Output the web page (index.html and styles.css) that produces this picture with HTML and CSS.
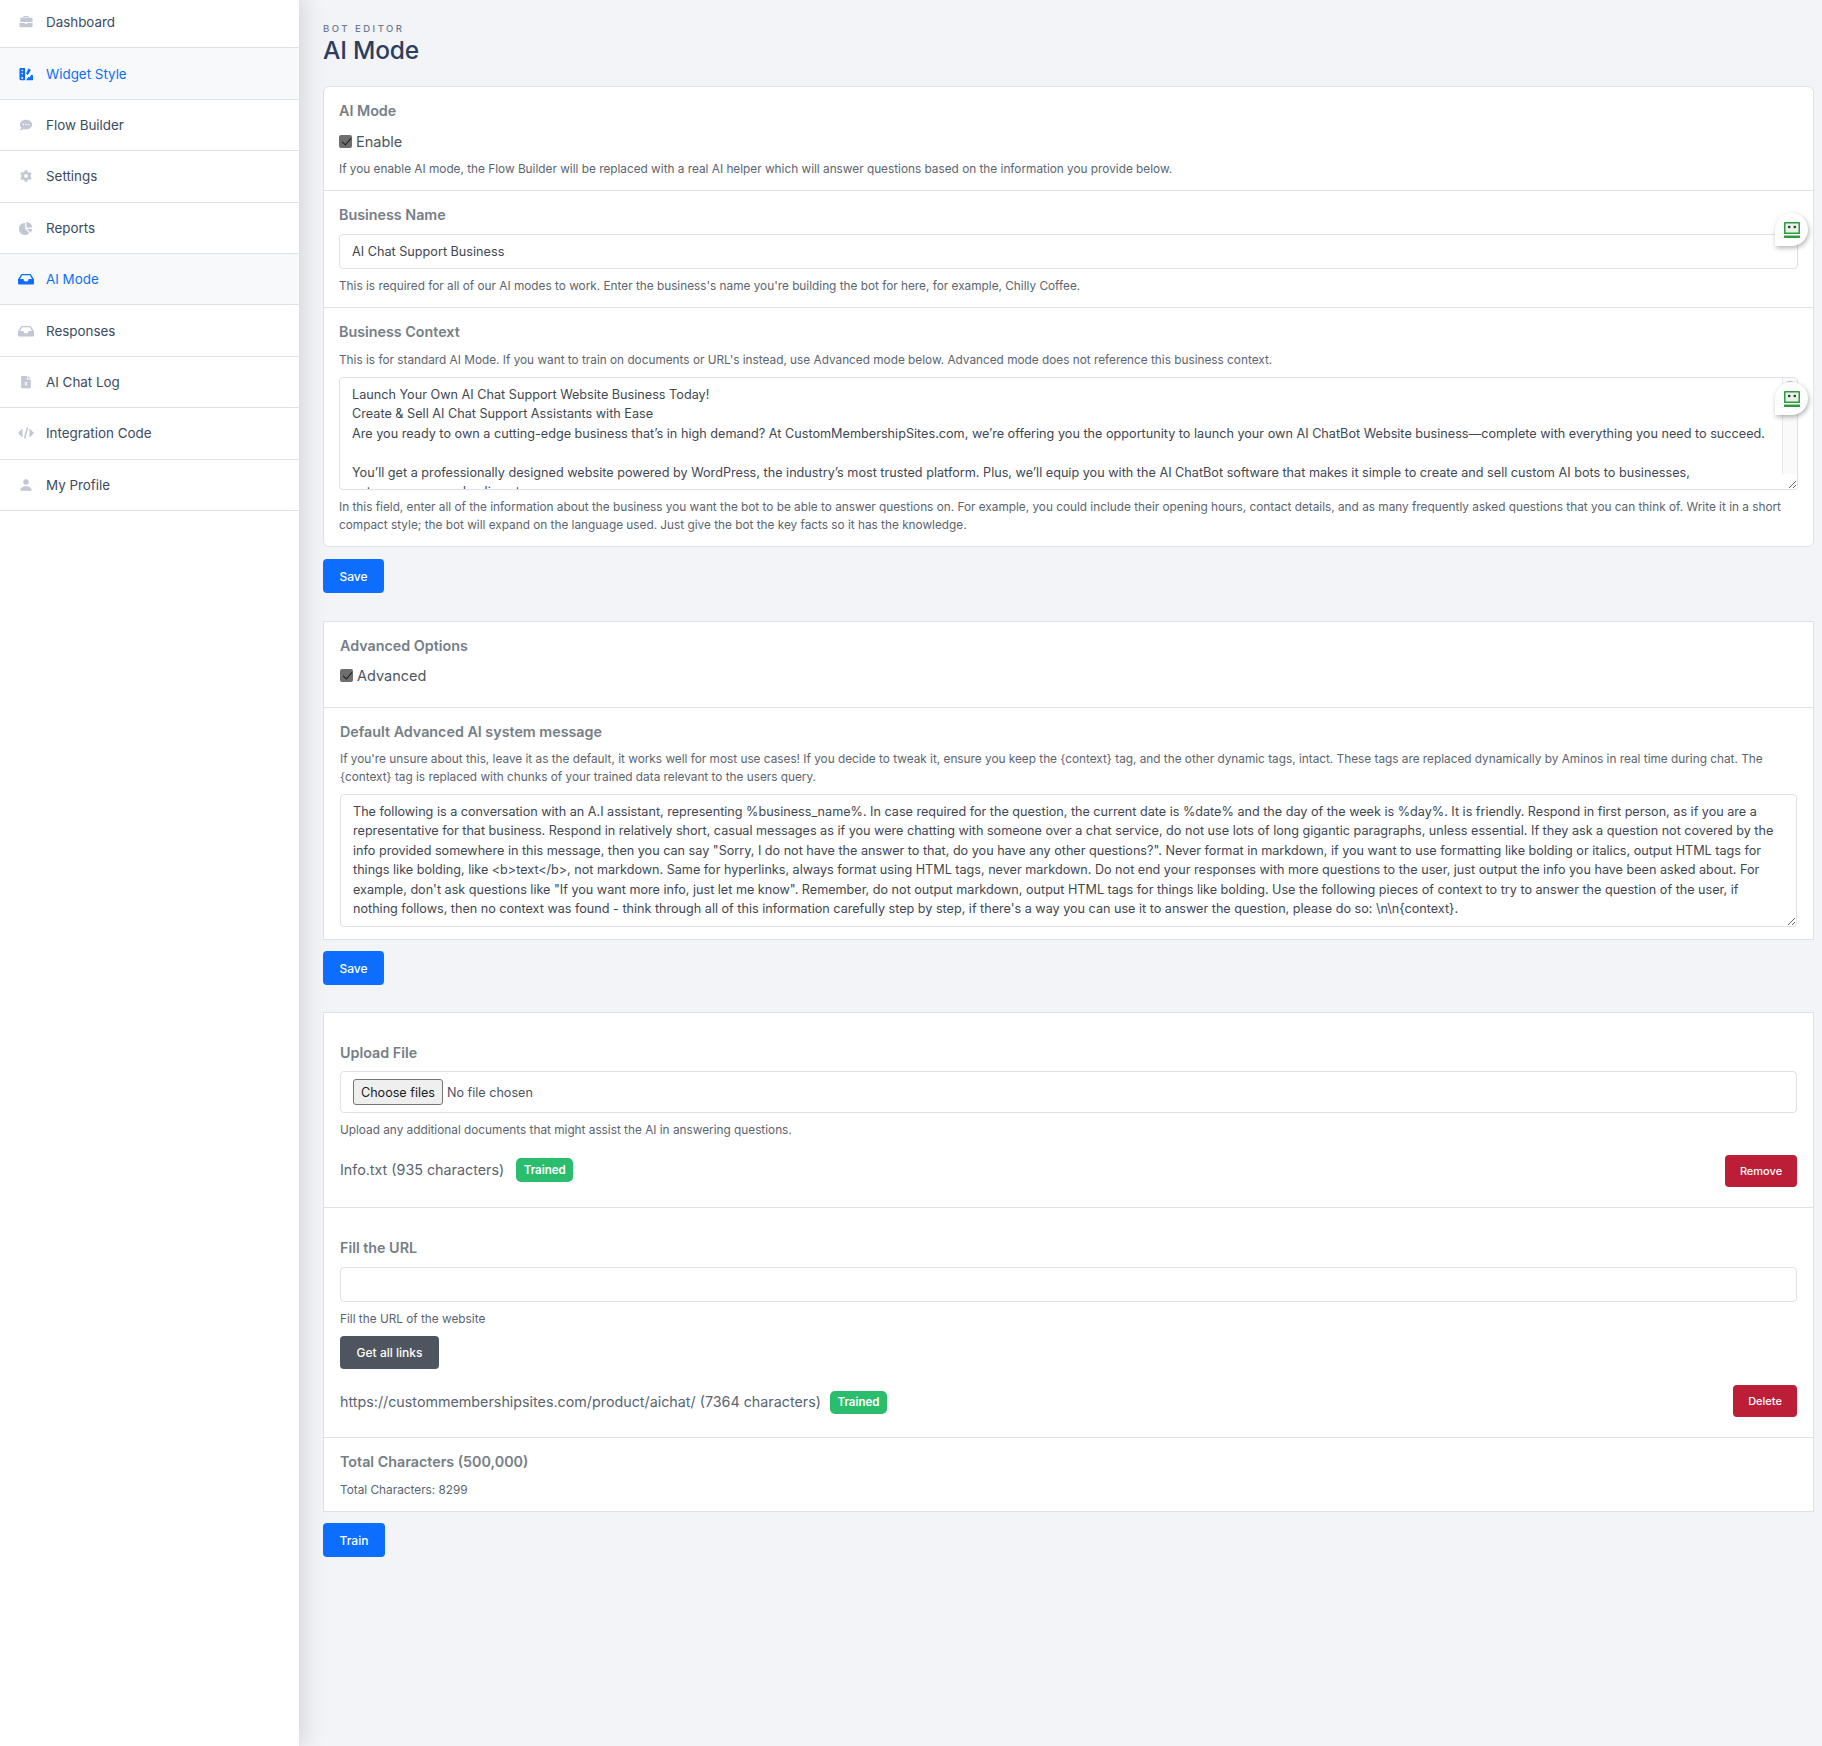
FILE: index.html
```
<!DOCTYPE html>
<html lang="en">
<head>
<meta charset="utf-8">
<title>AI Mode</title>
<link rel="stylesheet" href="styles.css">
</head>
<body>
<div class="layout">
  <nav class="sidebar">
    <a class="nav-item"><svg class="ico" viewBox="0 0 16 16"><path d="M5 3V2a1 1 0 0 1 1-1h4a1 1 0 0 1 1 1v1h3a1.500 1.500 0 0 1 1.500 1.500V8h-14V4.500A1.500 1.500 0 0 1 2 3zm1.300 0h3.400V2.300H6.300zM.5 9h6v1h3V9h6v3.500A1.500 1.500 0 0 1 14 14H2a1.500 1.500 0 0 1-1.500-1.500z"/></svg><span>Dashboard</span></a>
    <a class="nav-item active"><svg class="ico" viewBox="0 0 16 16"><path fill-rule="evenodd" d="M1.500 1H6a1 1 0 0 1 1 1v12a1 1 0 0 1-1 1H2a1.500 1.500 0 0 1-1.500-1.500V2a1 1 0 0 1 1-1zM3.700 3a.9.9 0 1 0 0 1.800.9.9 0 0 0 0-1.800zm0 3.500a.9.9 0 1 0 0 1.800.9.9 0 0 0 0-1.800zm0 5a1.100 1.100 0 1 0 0 2.200 1.100 1.100 0 0 0 0-2.200z"/><path d="M11 1.500l2.500 1.800L10.200 9 8 7.500zM16 9.500V15H8l3-3.800 1 .7 2-3z"/></svg><span>Widget Style</span></a>
    <a class="nav-item"><svg class="ico" viewBox="0 0 16 16"><path d="M8 2c4 0 7 2.500 7 5.500S12 13 8 13c-.9 0-1.800-.1-2.600-.4C4.300 13.500 2.700 14 1 14c.8-.8 1.400-1.800 1.500-2.800C1.500 10.200 1 8.900 1 7.500 1 4.500 4 2 8 2z"/><circle cx="5" cy="7.500" r=".9" fill="#fff"/><circle cx="8" cy="7.500" r=".9" fill="#fff"/><circle cx="11" cy="7.500" r=".9" fill="#fff"/></svg><span>Flow Builder</span></a>
    <a class="nav-item"><svg class="ico" viewBox="0 0 16 16"><path fill-rule="evenodd" d="M6.500 1.500h3l.4 1.800 1.300.7 1.800-.5 1.400 2.500-1.300 1.300v1.400l1.300 1.300-1.400 2.500-1.800-.5-1.300.7-.4 1.800h-3l-.4-1.800-1.300-.7-1.800.5L1.600 10l1.300-1.300V7.300L1.600 6 3 3.500l1.800.5 1.300-.7zM8 5.800a2.200 2.200 0 1 0 0 4.400 2.200 2.200 0 0 0 0-4.400z"/></svg><span>Settings</span></a>
    <a class="nav-item"><svg class="ico" viewBox="0 0 16 16"><path d="M7 2.200V9l4.800 4.800A6.900 6.900 0 1 1 7 2.200zM8.500 1a6.500 6.500 0 0 1 6.500 6.500H8.500zM9 9h6a6.500 6.500 0 0 1-1.900 4.100z"/></svg><span>Reports</span></a>
    <a class="nav-item active"><svg class="ico wide" viewBox="0 0 16 16"><path d="M3.800 3h8.400a1 1 0 0 1 .8.400L15.800 8c.1.200.2.400.2.600v3.900a1 1 0 0 1-1 1H1a1 1 0 0 1-1-1V8.600c0-.2.100-.4.200-.6L3 3.400a1 1 0 0 1 .8-.4zm.3 1.300L2 8h3.500a2.500 2.500 0 0 0 5 0H14l-2.100-3.700z"/></svg><span>AI Mode</span></a>
    <a class="nav-item"><svg class="ico wide" viewBox="0 0 16 16"><path d="M3.800 3h8.400a1 1 0 0 1 .8.400L15.800 8c.1.200.2.400.2.600v3.900a1 1 0 0 1-1 1H1a1 1 0 0 1-1-1V8.600c0-.2.100-.4.200-.6L3 3.400a1 1 0 0 1 .8-.4zm.3 1.300L2 8h3.500a2.500 2.500 0 0 0 5 0H14l-2.100-3.700z"/></svg><span>Responses</span></a>
    <a class="nav-item"><svg class="ico" viewBox="0 0 16 16"><path fill-rule="evenodd" d="M3 1h6v4h4.500v9a1 1 0 0 1-1 1H3.500a1 1 0 0 1-1-1V2A1 1 0 0 1 3 1zm7 0 3.500 3H10zM6 8l1.500 2L6 12h1.200L8 10.800l.8 1.200H10l-1.500-2L10 8H8.800L8 9.200 7.200 8z"/></svg><span>AI Chat Log</span></a>
    <a class="nav-item"><svg class="ico wide" viewBox="0 0 16 16" fill="none" stroke-width="1.500"><path class="stroke" d="M4.500 4.500 1 8l3.500 3.500M11.500 4.500 15 8l-3.500 3.500M9.500 2.500l-3 11"/></svg><span>Integration Code</span></a>
    <a class="nav-item"><svg class="ico" viewBox="0 0 16 16"><circle cx="8" cy="4.500" r="3.200"/><path d="M1.500 14.500c0-3 2.500-5 6.500-5s6.500 2 6.500 5z"/></svg><span>My Profile</span></a>
  </nav>
  <main class="main">
    <header class="page-head">
      <div class="eyebrow">BOT EDITOR</div>
      <h1 class="title">AI Mode</h1>
    </header>

    <section class="card round">
      <div class="row r-mode">
        <h6 class="label">AI Mode</h6>
        <label class="check"><input type="checkbox" checked><span>Enable</span></label>
        <div class="hint">If you enable AI mode, the Flow Builder will be replaced with a real AI helper which will answer questions based on the information you provide below.</div>
      </div>
      <div class="row r-name">
        <h6 class="label">Business Name</h6>
        <input class="field" type="text" value="AI Chat Support Business">
        <div class="hint hint-after">This is required for all of our AI modes to work. Enter the business's name you're building the bot for here, for example, Chilly Coffee.</div>
        <span class="rf-badge"><svg viewBox="0 0 16 16"><path d="M1 0h14a1 1 0 0 1 1 1v11H0V1a1 1 0 0 1 1-1z"/><rect y="13.500" width="16" height="2.500" rx=".5"/><rect x="1.500" y="1.500" width="13" height="9" fill="#e6f2e6"/><circle cx="5.200" cy="5" r="1.300" fill="#333"/><circle cx="10.800" cy="5" r="1.300" fill="#333"/></svg></span>
      </div>
      <div class="row r-context">
        <h6 class="label">Business Context</h6>
        <div class="hint hint-before">This is for standard AI Mode. If you want to train on documents or URL's instead, use Advanced mode below. Advanced mode does not reference this business context.</div>
        <div class="area-wrap">
          <textarea class="area area-context" spellcheck="false">Launch Your Own AI Chat Support Website Business Today!
Create &amp; Sell AI Chat Support Assistants with Ease
Are you ready to own a cutting-edge business that’s in high demand? At CustomMembershipSites.com, we’re offering you the opportunity to launch your own AI ChatBot Website business—complete with everything you need to succeed.

You’ll get a professionally designed website powered by WordPress, the industry’s most trusted platform. Plus, we’ll equip you with the AI ChatBot software that makes it simple to create and sell custom AI bots to businesses, entrepreneurs, and online stores.</textarea>
          <span class="fake-scroll"><span class="fake-thumb"></span></span>
        </div>
        <div class="hint hint-after">In this field, enter all of the information about the business you want the bot to be able to answer questions on. For example, you could include their opening hours, contact details, and as many frequently asked questions that you can think of. Write it in a short compact style; the bot will expand on the language used. Just give the bot the key facts so it has the knowledge.</div>
        <span class="rf-badge rf-badge-2"><svg viewBox="0 0 16 16"><path d="M1 0h14a1 1 0 0 1 1 1v11H0V1a1 1 0 0 1 1-1z"/><rect y="13.500" width="16" height="2.500" rx=".5"/><rect x="1.500" y="1.500" width="13" height="9" fill="#e6f2e6"/><circle cx="5.200" cy="5" r="1.300" fill="#333"/><circle cx="10.800" cy="5" r="1.300" fill="#333"/></svg></span>
      </div>
    </section>
    <button class="btn btn-save">Save</button>

    <section class="card">
      <div class="row r-adv">
        <h6 class="label">Advanced Options</h6>
        <label class="check"><input type="checkbox" checked><span>Advanced</span></label>
      </div>
      <div class="row r-sys">
        <h6 class="label">Default Advanced AI system message</h6>
        <div class="hint hint-sys">If you're unsure about this, leave it as the default, it works well for most use cases! If you decide to tweak it, ensure you keep the {context} tag, and the other dynamic tags, intact. These tags are replaced dynamically by Aminos in real time during chat. The {context} tag is replaced with chunks of your trained data relevant to the users query.</div>
        <textarea class="area area-sys" spellcheck="false">The following is a conversation with an A.I assistant, representing %business_name%. In case required for the question, the current date is %date% and the day of the week is %day%. It is friendly. Respond in first person, as if you are a representative for that business. Respond in relatively short, casual messages as if you were chatting with someone over a chat service, do not use lots of long gigantic paragraphs, unless essential. If they ask a question not covered by the info provided somewhere in this message, then you can say "Sorry, I do not have the answer to that, do you have any other questions?". Never format in markdown, if you want to use formatting like bolding or italics, output HTML tags for things like bolding, like &lt;b&gt;text&lt;/b&gt;, not markdown. Same for hyperlinks, always format using HTML tags, never markdown. Do not end your responses with more questions to the user, just output the info you have been asked about. For example, don't ask questions like "If you want more info, just let me know". Remember, do not output markdown, output HTML tags for things like bolding. Use the following pieces of context to try to answer the question of the user, if nothing follows, then no context was found - think through all of this information carefully step by step, if there's a way you can use it to answer the question, please do so: \n\n{context}.</textarea>
      </div>
    </section>
    <button class="btn btn-save btn-save-last">Save</button>

    <section class="card">
      <div class="row r-upload">
        <h6 class="label">Upload File</h6>
        <div class="file-box"><button class="chooser" type="button">Choose files</button><span class="no-file">No file chosen</span></div>
        <div class="hint hint-after">Upload any additional documents that might assist the AI in answering questions.</div>
        <div class="doc-row doc-upload">
          <span class="doc">Info.txt (935 characters)</span><span class="badge badge-wide">Trained</span>
          <button class="btn-small danger remove">Remove</button>
        </div>
      </div>
      <div class="row r-url">
        <h6 class="label">Fill the URL</h6>
        <input class="field" type="text">
        <div class="hint hint-after">Fill the URL of the website</div>
        <button class="btn-small dark">Get all links</button>
        <div class="doc-row doc-url">
          <span class="doc">https://custommembershipsites.com/product/aichat/ (7364 characters)</span><span class="badge">Trained</span>
          <button class="btn-small danger delete">Delete</button>
        </div>
      </div>
      <div class="row r-total">
        <h6 class="label">Total Characters (500,000)</h6>
        <div class="hint total">Total Characters: 8299</div>
      </div>
    </section>
    <button class="btn btn-train">Train</button>
  </main>
</div>
</body>
</html>
```
FILE: styles.css
```
* { box-sizing: border-box; }
html, body { margin: 0; padding: 0; }
body {
  font-family: Inter, "Liberation Sans", sans-serif;
  background: #f3f4f7;
  color: #4b5563;
  width: 1822px;
  height: 1746px;
  overflow: hidden;
}
.layout { display: flex; height: 1746px; }
.sidebar {
  width: 299px;
  flex: none;
  background: #fff;
  box-shadow: 0 0 24px rgba(40, 50, 70, .22);
  position: relative;
  z-index: 1;
  margin-top: -3px;
}
.nav-item {
  display: flex;
  align-items: center;
  height: 51.4px;
  padding-left: 18px;
  border-bottom: 1px solid #dfe1e8;
  color: #3c4a63;
  font-size: 13.4px;
  background: #fff;
}
.nav-item span { margin-left: 13px; }
.nav-item.active { color: #0d6efd; background: #f8f9fa; }
.ico { width: 14px; height: 14px; fill: #c3c6d3; margin-left: 1px; flex: none; }
.ico.wide { width: 16px; height: 16px; margin-left: 0; margin-right: -1px; }
.ico .stroke { stroke: #c3c6d3; }
.active .ico { fill: #0d6efd; }

.main { flex: 1; padding: 23px 8px 0 24px; min-width: 0; }
.page-head { height: 63px; }
.eyebrow { font-size: 9.5px; letter-spacing: 2.5px; color: #6c7a93; font-weight: 500; line-height: 11px; }
.title { margin: 1px 0 0; font-size: 24.5px; line-height: 30px; font-weight: 500; color: #2c3e5f; letter-spacing: -.2px; }

.card { background: #fff; border: 1px solid #dfe1e6; }
.round { border-radius: 6px; }
.row { padding: 15px 16px 0; border-bottom: 1px solid #dfe1e6; position: relative; }
.round .row { padding-left: 15px; padding-right: 15px; }
.row:last-child { border-bottom: 0; }
.label { margin: 0; font-size: 14.3px; line-height: 17px; font-weight: 600; color: #767e87; }
.check { display: flex; align-items: center; font-size: 14.5px; line-height: 20px; margin-top: 13px; color: #4b5563; }
.check input {
  appearance: none;
  position: relative;
  width: 13px;
  height: 13px;
  margin: -2px 4px 0 0;
  background: #6e6e6e;
  border-radius: 2px;
}
.check input::after {
  content: "";
  position: absolute;
  left: 4.5px;
  top: 1.5px;
  width: 4px;
  height: 8px;
  border: solid #1c1c1c;
  border-width: 0 1.5px 1.5px 0;
  transform: rotate(40deg);
}
.hint { font-size: 11.8px; line-height: 18px; color: #5b6470; }
.r-mode { height: 104px; }
.r-mode .hint { margin-top: 8px; }
.r-name { height: 117px; }
.field {
  display: block;
  width: 100%;
  height: 35px;
  margin-top: 11px;
  border: 1px solid #dfe1e8;
  border-radius: 4px;
  padding: 0 12px;
  font: 12.67px Inter, sans-serif;
  color: #3f4752;
  background: #fff;
}
.hint-after { margin-top: 8px; }
.hint-before { margin-top: 11px; }
.hint-sys { margin-top: 10px; }
.r-context { height: 238px; }
.area-wrap { position: relative; margin-top: 8px; }
.area {
  display: block;
  width: 100%;
  border: 1px solid #dfe1e8;
  border-radius: 4px;
  font: 12.67px/19.5px Inter, sans-serif;
  color: #3f4752;
  padding: 6.5px 12px;
  background: #fff;
}
.area-context { height: 113px; margin: 0; overflow: hidden; padding-right: 27px; }
.fake-scroll {
  position: absolute;
  top: 1px;
  right: 1px;
  width: 15px;
  height: 96px;
  background: #fafafa;
  border-left: 1px solid #e8e8e8;
  border-top-right-radius: 3px;
}
.fake-thumb {
  display: block;
  width: 8px;
  height: 30px;
  margin: 3px 0 0 3px;
  background: #c1c1c1;
  border-radius: 4px;
}
.area-sys { height: 133px; margin-top: 8px; font-size: 12.62px; }
.btn {
  display: block;
  height: 34px;
  width: 61px;
  border: 0;
  border-radius: 4px;
  background: #0d6efd;
  color: #fff;
  font: 500 12px Inter, sans-serif;
  padding: 0;
}
.btn-save { margin: 12px 0 28px; }
.btn-save-last { margin: 11px 0 27px; }
.btn-train { margin-top: 11px; width: 62px; }

.r-adv { height: 86px; }
.r-sys { height: 231px; }
.r-adv .check { margin-top: 12px; }

.r-upload { height: 195px; padding-top: 31px; }
.file-box {
  height: 42px;
  margin-top: 10px;
  border: 1px solid #dfe1e8;
  border-radius: 4px;
  padding: 0 12px;
  display: flex;
  align-items: center;
}
.chooser {
  width: 90px;
  height: 26px;
  padding: 0;
  background: #efefef;
  border: 1px solid #767676;
  border-radius: 3px;
  color: #1c1c1c;
  font: 12.6px Inter, sans-serif;
  white-space: nowrap;
}
.no-file { margin-left: 4px; font-size: 12.6px; color: #4b5563; }
.doc-row { display: flex; align-items: center; position: relative; }
.doc-upload { margin-top: 14px; height: 32px; }
.doc { font-size: 14.3px; color: #5b6470; }
.badge {
  background: #2bbd6e;
  color: #fff;
  font-size: 11.5px;
  font-weight: 600;
  height: 23px;
  line-height: 23px;
  padding: 0 7.5px;
  border-radius: 5px;
  margin: 2px 0 0 9px;
}
.badge-wide { margin-left: 12px; height: 24px; line-height: 24px; }
.btn-small {
  border: 0;
  border-radius: 4px;
  color: #fff;
  font: 500 11px Inter, sans-serif;
  height: 32px;
  padding: 0;
}
.danger { background: #bb1e36; margin-left: auto; }
.remove { width: 72px; margin-top: 3px; }
.delete { width: 64px; }
.dark { background: #4e555e; width: 99px; height: 33px; font-size: 12px; display: block; margin-top: 8px; }
.r-url { height: 230px; padding-top: 31px; }
.doc-url { margin-top: 16px; height: 32px; }
.r-total { height: 73px; padding-top: 15px; }
.total { margin-top: 11px; }

.rf-badge {
  position: absolute;
  right: 5px;
  top: 22px;
  width: 33px;
  height: 33px;
  background: #fff;
  border-radius: 50% 50% 50% 0;
  box-shadow: 1px 2px 5px rgba(0, 0, 0, .3);
  display: flex;
  align-items: center;
  justify-content: center;
}
.rf-badge-2 { top: 74px; }
.rf-badge svg { width: 16px; height: 16px; fill: #2c9b3c; }
```
